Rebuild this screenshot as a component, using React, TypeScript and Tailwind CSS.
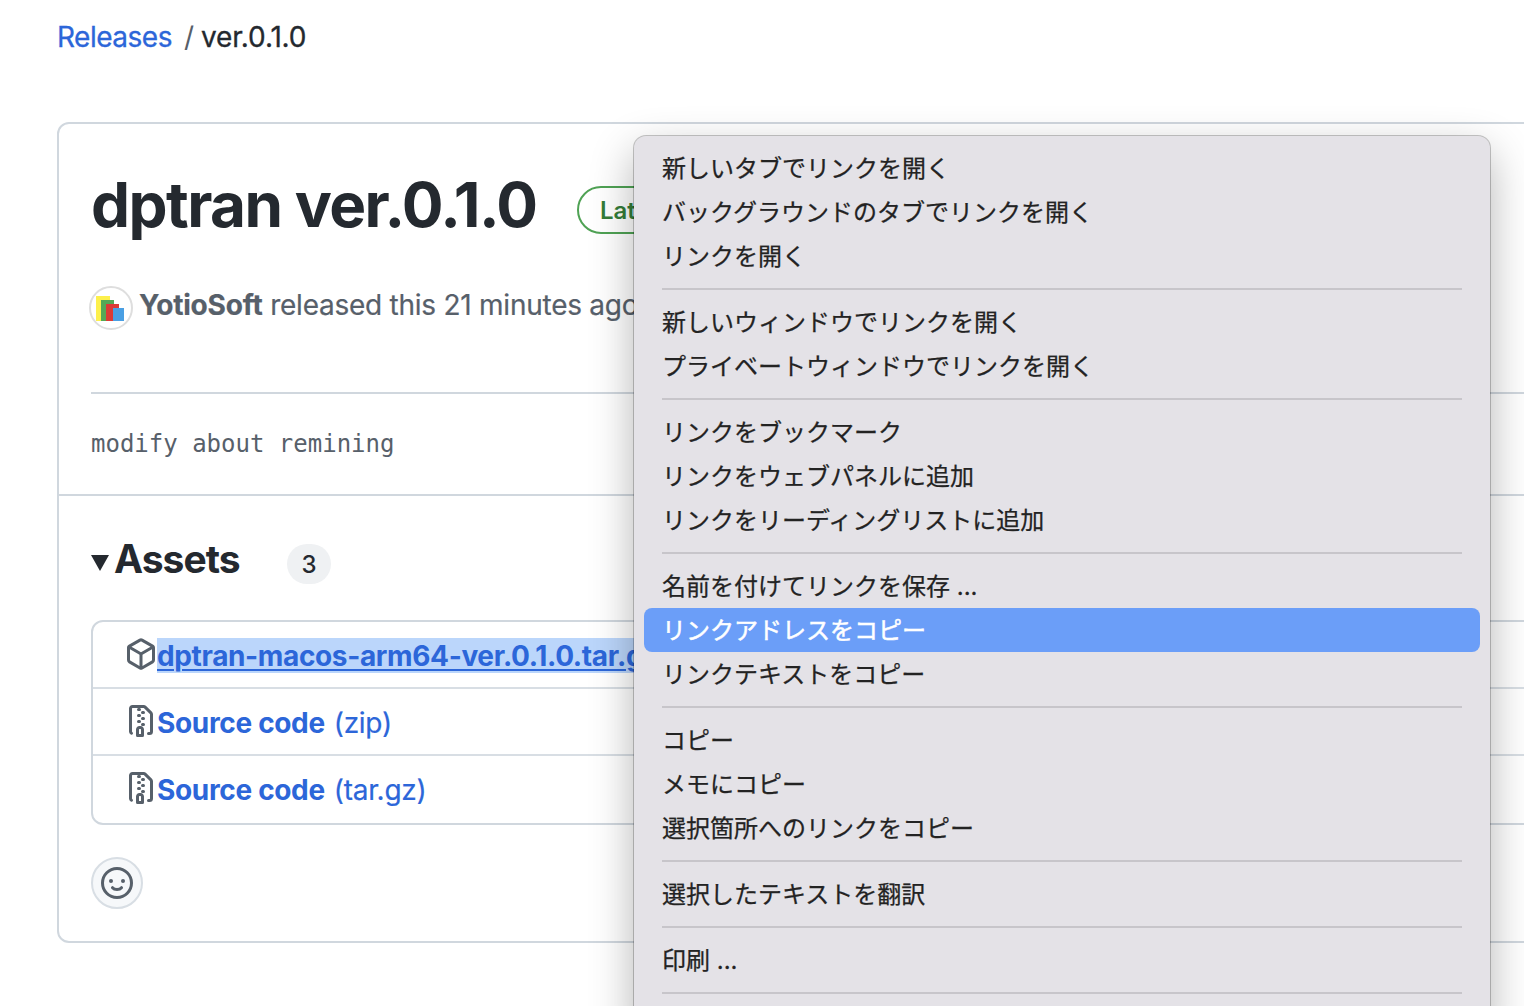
import React from "react";

const PACKAGE =
  "m8.878.392 5.25 3.045c.54.314.872.89.872 1.514v6.098a1.75 1.75 0 0 1-.872 1.514l-5.25 3.045a1.75 1.75 0 0 1-1.756 0l-5.25-3.045A1.75 1.75 0 0 1 1 11.049V4.951c0-.624.332-1.201.872-1.514L7.122.392a1.75 1.75 0 0 1 1.756 0ZM7.875 1.69l-4.63 2.685L8 7.133l4.755-2.758-4.63-2.685a.248.248 0 0 0-.25 0ZM2.5 5.677v5.372c0 .09.047.171.125.216l4.625 2.683V8.432Zm6.25 8.271 4.625-2.683a.25.25 0 0 0 .125-.216V5.677L8.75 8.432Z";
const FILE_ZIP =
  "M3.5 1.75v11.5c0 .09.048.173.126.217a.75.75 0 0 1-.752 1.298A1.748 1.748 0 0 1 2 13.25V1.75C2 .784 2.784 0 3.75 0h5.586c.464 0 .909.185 1.237.513l2.914 2.914c.329.328.513.773.513 1.237v8.586A1.75 1.75 0 0 1 12.25 15h-.5a.75.75 0 0 1 0-1.5h.5a.25.25 0 0 0 .25-.25V4.664a.25.25 0 0 0-.073-.177L9.513 1.573a.25.25 0 0 0-.177-.073H7.25a.75.75 0 0 1 0 1.5h-.5a.75.75 0 0 1 0-1.5h-3a.25.25 0 0 0-.25.25Zm3.75 8.75h.5c.966 0 1.75.784 1.75 1.75v3a.75.75 0 0 1-.75.75h-2.5a.75.75 0 0 1-.75-.75v-3c0-.966.784-1.75 1.75-1.75ZM6 5.25a.75.75 0 0 1 .75-.75h.5a.75.75 0 0 1 0 1.5h-.5A.75.75 0 0 1 6 5.25Zm.75 2.25h.5a.75.75 0 0 1 0 1.5h-.5a.75.75 0 0 1 0-1.5ZM8 6.75A.75.75 0 0 1 8.75 6h.5a.75.75 0 0 1 0 1.5h-.5A.75.75 0 0 1 8 6.75ZM8.75 3h.5a.75.75 0 0 1 0 1.5h-.5a.75.75 0 0 1 0-1.5ZM8 9.75A.75.75 0 0 1 8.75 9h.5a.75.75 0 0 1 0 1.5h-.5A.75.75 0 0 1 8 9.75Zm-1 2.5v2.25h1v-2.25a.25.25 0 0 0-.25-.25h-.5a.25.25 0 0 0-.25.25Z";

function Icon({ d }: { d: string }) {
  return (
    <svg viewBox="0 0 16 16" className="size-8 shrink-0 fill-[#57606a]">
      <path d={d} />
    </svg>
  );
}

function Smiley() {
  return (
    <svg viewBox="0 0 16 16" className="size-8 fill-none stroke-[#57606a]" strokeWidth="1.5" strokeLinecap="round">
      <circle cx="8" cy="8" r="7.25" />
      <path d="M5.75 10.35c.5.6 1.25.9 2.25.9s1.750-.3 2.250-.9" />
      <circle cx="5" cy="7" r="1" className="fill-[#57606a] stroke-none" />
      <circle cx="11" cy="7" r="1" className="fill-[#57606a] stroke-none" />
    </svg>
  );
}

function Avatar() {
  return (
    <span className="mt-px flex size-11 shrink-0 items-center justify-center rounded-full border-2 border-[#dedede] bg-white">
      <svg viewBox="0 0 40 40" className="size-10">
        <path d="M5 8h14v25H5z" fill="#fdf04c" />
        <path d="M10 12h13v21H10z" fill="#55a856" />
        <path d="M15 16h13v17H15z" fill="#dc3a35" />
        <path d="M22 20h11v13H22z" fill="#4a9fe3" />
      </svg>
    </span>
  );
}

const MENU: string[][] = [
  ["新しいタブでリンクを開く", "バックグラウンドのタブでリンクを開く", "リンクを開く"],
  ["新しいウィンドウでリンクを開く", "プライベートウィンドウでリンクを開く"],
  ["リンクをブックマーク", "リンクをウェブパネルに追加", "リンクをリーディングリストに追加"],
  ["名前を付けてリンクを保存 ...", "リンクアドレスをコピー", "リンクテキストをコピー"],
  ["コピー", "メモにコピー", "選択箇所へのリンクをコピー"],
  ["選択したテキストを翻訳"],
  ["印刷 ..."],
];
const ACTIVE = "リンクアドレスをコピー";

function ContextMenu() {
  return (
    <div className="absolute left-[634px] top-[136px] h-[900px] w-[856px] rounded-xl bg-[#e4e2e7] px-2.5 pt-2.5 font-['Inter','Noto_Sans_CJK_JP',sans-serif] text-[24px] text-[#232323] shadow-[0_0_0_1px_rgba(0,0,0,0.22),0_16px_44px_rgba(0,0,0,0.3)] [-webkit-text-stroke:0.25px]">
      {MENU.map((group, i) => (
        <div key={i}>
          {group.map((label) => (
            <div
              key={label}
              className={
                label === ACTIVE
                  ? "flex h-11 items-center rounded-lg bg-[#6b9ef8] px-[18px] pt-0.5 text-white [-webkit-text-stroke:0.5px]"
                  : "flex h-11 items-center px-[18px] pt-0.5"
              }
            >
              <span className="whitespace-pre leading-8">{label}</span>
            </div>
          ))}
          <div className="mx-[18px] flex h-[22px] items-center">
            <div className="h-0.5 w-full bg-[#c7c5ca]" />
          </div>
        </div>
      ))}
    </div>
  );
}

export default function App() {
  return (
    <div className="relative h-[1006px] w-[1524px] overflow-hidden bg-white font-['Inter',sans-serif] text-[#24292f]">
      <nav className="flex h-[122px] items-start pl-[57px] pt-[17px] text-[28px] leading-10">
        <span className="tracking-[-0.5px] text-[#2c66d9] [-webkit-text-stroke:0.3px]">Releases</span>
        <span className="ml-3 text-[#57606a]">/</span>
        <span className="ml-[7px] tracking-[-0.15px] [-webkit-text-stroke:0.3px]">ver.0.1.0</span>
      </nav>

      <main className="ml-[57px] h-[821px] w-[1600px] rounded-xl border-2 border-[#d0d7de]">
        <header className="mx-8 h-[270px] border-b-2 border-[#d0d7de]">
          <div className="flex h-[161px] items-start pt-[41px]">
            <h1 className="w-[486px] whitespace-nowrap text-[62px] font-bold leading-[80px] tracking-[-1.55px]">dptran ver.0.1.0</h1>
            <span className="mt-[21px] flex h-12 w-[120px] items-center rounded-full border-2 border-[#4fa254] pl-[21px] pt-0.5 text-[24px] font-semibold text-[#347d39]">Latest</span>
          </div>
          <div className="-ml-0.5 flex items-start text-[28px] leading-10 text-[#57606a]">
            <Avatar />
            <p className="ml-1.5 whitespace-nowrap tracking-[-0.25px] [-webkit-text-stroke:0.2px]">
              <b className="font-bold tracking-[-0.2px]">YotioSoft</b> released this 21 minutes ago
            </p>
          </div>
        </header>
        <div className="flex h-[102px] items-center border-b-2 border-[#d0d7de] pl-8 font-['DejaVu_Sans_Mono',monospace] text-[24px] text-[#57606a]">
          modify about remining
        </div>
        <section className="pl-8">
          <div className="flex h-[124px] items-start pt-11">
            <svg viewBox="0 0 18 16" className="mt-[15px] h-4 w-[18px] fill-[#24292f]">
              <path d="M0 0h18L9 16z" />
            </svg>
            <h2 className="ml-[5px] w-[173px] text-[39px] font-bold leading-[38px] tracking-[-0.95px]">Assets</h2>
            <span className="mt-1 flex h-10 w-11 items-center justify-center rounded-full bg-[#eff1f3] pt-0.5 text-[24px] font-medium">3</span>
          </div>
          <div className="h-[205px] w-[1580px] rounded-xl border-2 border-[#d0d7de] text-[28px] text-[#2c66d9]">
            <div className="flex h-[67px] items-center border-b-2 border-[#d8dee4] pb-0.5 pl-8">
              <Icon d={PACKAGE} />
              <span className="mt-1 h-[35px] whitespace-nowrap bg-[#bbd6fb] font-bold leading-[37px] tracking-[-0.36px] underline decoration-2 underline-offset-[3px]">dptran-macos-arm64-ver.0.1.0.tar.gz</span>
            </div>
            <div className="flex h-[67px] items-center border-b-2 border-[#d8dee4] pb-0.5 pl-8">
              <Icon d={FILE_ZIP} />
              <span className="mt-1 whitespace-pre font-bold tracking-[-0.33px]">Source code</span>
              <span className="ml-[9px] mt-1 tracking-[-0.3px] [-webkit-text-stroke:0.2px]">(zip)</span>
            </div>
            <div className="flex h-[67px] items-center pb-1 pl-8">
              <Icon d={FILE_ZIP} />
              <span className="mt-1 whitespace-pre font-bold tracking-[-0.33px]">Source code</span>
              <span className="ml-[9px] mt-1 tracking-[-0.3px] [-webkit-text-stroke:0.2px]">(tar.gz)</span>
            </div>
          </div>
          <button className="mt-8 flex size-[52px] items-center justify-center rounded-full border-2 border-[#d8dee4] bg-[#f6f8fa]">
            <Smiley />
          </button>
        </section>
      </main>
      <ContextMenu />
    </div>
  );
}
